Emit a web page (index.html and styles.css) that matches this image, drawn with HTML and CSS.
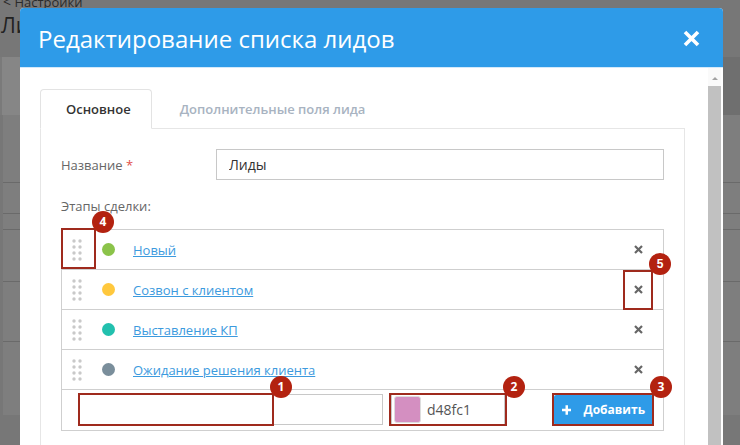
FILE: index.html
```html
<!DOCTYPE html>
<html lang="ru">
<head>
    <meta charset="UTF-8">
    <meta name="viewport" content="width=device-width, initial-scale=1.0">
    <title>Редактирование списка лидов</title>
    <link rel="stylesheet" href="styles.css">
</head>
<body>
<div class="page">
    <div class="crumbs"><span class="crumbs-arrow">&lt;</span> Настройки</div>
    <h1 class="page-title">Лиды</h1>
    <div class="toolbar">
        <div class="toolbar-left"></div>
        <div class="toolbar-right"></div>
    </div>
    <div class="table">
        <div class="table-row"></div>
        <div class="table-row"></div>
        <div class="table-row"></div>
        <div class="table-row"></div>
        <div class="table-row"></div>
        <div class="table-row"></div>
    </div>
</div>

<div class="modal">
    <div class="modal-header">
        <h2 class="modal-title">Редактирование списка лидов</h2>
        <button class="modal-close" aria-label="Закрыть">
            <svg width="17" height="17" viewBox="0 0 17 17"><path d="M2 2 L15 15 M15 2 L2 15" stroke="#fff" stroke-width="3.6"/></svg>
        </button>
    </div>
    <div class="modal-body">
        <div class="modal-content">
            <div class="tabs">
                <div class="tab active">Основное</div>
                <div class="tab">Дополнительные поля лида</div>
            </div>
            <div class="tab-panel">
                <div class="field">
                    <label class="field-label">Название <span class="req">*</span></label>
                    <input class="field-input" type="text" value="Лиды">
                </div>
                <div class="stages-label">Этапы сделки:</div>
                <div class="stages">
                    <div class="stage">
                        <span class="handle">
                            <svg width="10" height="22" viewBox="0 0 10 22"><g fill="#c9c9c9"><circle cx="2" cy="2" r="1.7"/><circle cx="8" cy="2" r="1.7"/><circle cx="2" cy="8" r="1.7"/><circle cx="8" cy="8" r="1.7"/><circle cx="2" cy="14" r="1.7"/><circle cx="8" cy="14" r="1.7"/><circle cx="2" cy="20" r="1.7"/><circle cx="8" cy="20" r="1.7"/></g></svg>
                            <span class="mark mark-handle"><span class="badge">4</span></span>
                        </span>
                        <span class="stage-dot green"></span>
                        <a class="stage-link" href="#">Новый</a>
                        <button class="stage-remove" aria-label="Удалить">
                            <svg width="9" height="9" viewBox="0 0 9 9"><path d="M1 1 L8 8 M8 1 L1 8" stroke="#666" stroke-width="2.2"/></svg>
                        </button>
                    </div>
                    <div class="stage">
                        <span class="handle">
                            <svg width="10" height="22" viewBox="0 0 10 22"><g fill="#c9c9c9"><circle cx="2" cy="2" r="1.7"/><circle cx="8" cy="2" r="1.7"/><circle cx="2" cy="8" r="1.7"/><circle cx="8" cy="8" r="1.7"/><circle cx="2" cy="14" r="1.7"/><circle cx="8" cy="14" r="1.7"/><circle cx="2" cy="20" r="1.7"/><circle cx="8" cy="20" r="1.7"/></g></svg>
                        </span>
                        <span class="stage-dot yellow"></span>
                        <a class="stage-link" href="#">Созвон с клиентом</a>
                        <button class="stage-remove" aria-label="Удалить">
                            <svg width="9" height="9" viewBox="0 0 9 9"><path d="M1 1 L8 8 M8 1 L1 8" stroke="#666" stroke-width="2.2"/></svg>
                            <span class="mark mark-remove"><span class="badge">5</span></span>
                        </button>
                    </div>
                    <div class="stage">
                        <span class="handle">
                            <svg width="10" height="22" viewBox="0 0 10 22"><g fill="#c9c9c9"><circle cx="2" cy="2" r="1.7"/><circle cx="8" cy="2" r="1.7"/><circle cx="2" cy="8" r="1.7"/><circle cx="8" cy="8" r="1.7"/><circle cx="2" cy="14" r="1.7"/><circle cx="8" cy="14" r="1.7"/><circle cx="2" cy="20" r="1.7"/><circle cx="8" cy="20" r="1.7"/></g></svg>
                        </span>
                        <span class="stage-dot teal"></span>
                        <a class="stage-link" href="#">Выставление КП</a>
                        <button class="stage-remove" aria-label="Удалить">
                            <svg width="9" height="9" viewBox="0 0 9 9"><path d="M1 1 L8 8 M8 1 L1 8" stroke="#666" stroke-width="2.2"/></svg>
                        </button>
                    </div>
                    <div class="stage">
                        <span class="handle">
                            <svg width="10" height="22" viewBox="0 0 10 22"><g fill="#c9c9c9"><circle cx="2" cy="2" r="1.7"/><circle cx="8" cy="2" r="1.7"/><circle cx="2" cy="8" r="1.7"/><circle cx="8" cy="8" r="1.7"/><circle cx="2" cy="14" r="1.7"/><circle cx="8" cy="14" r="1.7"/><circle cx="2" cy="20" r="1.7"/><circle cx="8" cy="20" r="1.7"/></g></svg>
                        </span>
                        <span class="stage-dot slate"></span>
                        <a class="stage-link" href="#">Ожидание решения клиента</a>
                        <button class="stage-remove" aria-label="Удалить">
                            <svg width="9" height="9" viewBox="0 0 9 9"><path d="M1 1 L8 8 M8 1 L1 8" stroke="#666" stroke-width="2.2"/></svg>
                        </button>
                    </div>
                    <div class="stage-add">
                        <div class="add-name">
                            <input class="text-input" type="text">
                            <span class="mark mark-name"><span class="badge">1</span></span>
                        </div>
                        <div class="color-input">
                            <span class="swatch"></span>
                            <span class="color-code">d48fc1</span>
                            <span class="mark mark-color"><span class="badge">2</span></span>
                        </div>
                        <button class="btn-add">
                            <svg width="10" height="10" viewBox="0 0 10 10"><path d="M5 0 V10 M0 5 H10" stroke="#fff" stroke-width="2.6"/></svg>
                            Добавить
                            <span class="mark mark-btn"><span class="badge">3</span></span>
                        </button>
                    </div>
                </div>
            </div>
        </div>
        <div class="scrollbar">
            <span class="scroll-arrow"></span>
            <span class="scroll-thumb"></span>
        </div>
    </div>
</div>
</body>
</html>
```

FILE: styles.css
```css
:root {
    --blue: #2e9be8;
    --mark: #9f2a1d;
    --badge: #b32210;
    --border: #cfcfcf;
    --text: #333;
}

* {
    box-sizing: border-box;
    margin: 0;
    padding: 0;
}

body {
    width: 740px;
    height: 445px;
    overflow: hidden;
    position: relative;
    font-family: 'Open Sans', 'Noto Sans', sans-serif;
    color: var(--text);
    background: #777;
}

/* page behind the dialog, already dimmed */
.page {
    display: flex;
    flex-direction: column;
    height: 100%;
}

.crumbs {
    margin-top: -7px;
    padding-left: 3px;
    font-size: 13px;
    line-height: 18px;
    color: #2b2b2b;
}

.crumbs-arrow {
    font-size: 14px;
}

.page-title {
    padding-left: 1px;
    font-size: 21px;
    font-weight: 400;
    line-height: 28px;
    height: 46px;
    color: #222;
}

.toolbar {
    display: flex;
    height: 58px;
}

.toolbar-left {
    width: 50%;
    background: #868686;
    border-left: 2px solid #7a7a7a;
}

.toolbar-right {
    flex: 1;
    background: #6f6f6f;
}

.table {
    display: flex;
    flex-direction: column;
    height: 300px;
    margin-left: 3px;
    background: #7e7e7e;
}

.table-row {
    border-bottom: 1px solid #6a6a6a;
}

.table-row:nth-child(1) { height: 68px; }
.table-row:nth-child(2) { height: 31px; }
.table-row:nth-child(3) { height: 16px; }
.table-row:nth-child(4) { height: 52px; }
.table-row:nth-child(5) { height: 60px; }
.table-row:nth-child(6) { height: 73px; border-bottom: none; }

/* dialog */
.modal {
    position: absolute;
    left: 20px;
    top: 8px;
    width: 703px;
    height: 460px;
    display: flex;
    flex-direction: column;
    background: #fff;
    border-radius: 4px 4px 0 0;
    overflow: hidden;
}

.modal-header {
    display: flex;
    align-items: center;
    justify-content: space-between;
    height: 62px;
    padding: 1px 23px 0 18px;
    background: var(--blue);
    border-bottom: 1px solid #d3e9fa;
}

.modal-title {
    font-size: 24px;
    font-weight: 400;
    color: #fff;
}

.modal-close {
    display: flex;
    border: none;
    background: none;
    cursor: pointer;
}

.modal-body {
    flex: 1;
    display: flex;
    padding-right: 2px;
}

.modal-content {
    flex: 1;
    padding: 21px 23px 0 20px;
}

.scrollbar {
    width: 13px;
    display: flex;
    flex-direction: column;
    align-items: center;
    background: #fafafa;
}

.scroll-arrow {
    margin: 9px 0 6px;
    border-left: 3px solid transparent;
    border-right: 3px solid transparent;
    border-bottom: 3px solid #a3a3a3;
}

.scroll-thumb {
    flex: 1;
    width: 13px;
    background: #c1c1c1;
}

/* tabs */
.tabs {
    display: flex;
    height: 40px;
    margin-bottom: -1px;
    position: relative;
}

.tab {
    display: flex;
    align-items: center;
    padding: 0 24px 0 25px;
    font-size: 13px;
    font-weight: 600;
    color: #a8b3c1;
}

.tab.active {
    color: #333;
    background: #fff;
    border: 1px solid #e3e3e3;
    border-bottom-color: #fff;
    border-radius: 4px 4px 0 0;
    padding-right: 20px;
}

.tab + .tab {
    padding-left: 28px;
}

.tab-panel {
    border: 1px solid #e6e6e6;
    padding: 20px 20px 30px;
    height: 340px;
}

.field {
    display: flex;
    align-items: center;
    margin-bottom: 17px;
}

.field-label {
    width: 155px;
    font-size: 13px;
    color: #666;
}

.req {
    color: #e2504a;
}

.field-input {
    flex: 1;
    height: 31px;
    padding: 0 12px;
    border: 1px solid #c8c8c8;
    font-family: inherit;
    font-size: 14px;
    color: #333;
}

.stages-label {
    font-size: 13px;
    line-height: 18px;
    color: #666;
    margin-bottom: 14px;
}

/* stage list */
.stages {
    border: 1px solid var(--border);
}

.stage {
    display: flex;
    align-items: center;
    height: 40px;
    padding-right: 10px;
    border-bottom: 1px solid var(--border);
}

.handle {
    position: relative;
    display: flex;
    align-items: center;
    align-self: stretch;
    width: 34px;
    padding-left: 10px;
}

.stage-dot {
    width: 13px;
    height: 13px;
    margin-left: 6px;
    border-radius: 50%;
}

.stage-dot.green { background: #8bc34a; }
.stage-dot.yellow { background: #ffc83d; }
.stage-dot.teal { background: #22c0ae; }
.stage-dot.slate { background: #7a8e9b; }

.stage-link {
    margin-left: 18px;
    font-size: 13px;
    color: #3c9ade;
}

.stage-remove {
    position: relative;
    display: flex;
    align-items: center;
    justify-content: center;
    align-self: stretch;
    width: 30px;
    margin-left: auto;
    border: none;
    background: none;
    cursor: pointer;
}

.stage-add {
    display: flex;
    align-items: center;
    padding: 4px 10px 5px 17px;
}

.add-name {
    position: relative;
    width: 304px;
}

.text-input {
    display: block;
    width: 100%;
    height: 31px;
    border: 1px solid #c8c8c8;
}

.color-input {
    position: relative;
    display: flex;
    align-items: center;
    width: 114px;
    height: 31px;
    margin-left: 8px;
    padding: 2px;
    border: 1px solid #c8c8c8;
}

.swatch {
    width: 27px;
    height: 27px;
    border-radius: 3px;
    border: 1px solid #ddd;
    background: #d48fc1;
}

.color-code {
    margin-left: 6px;
    font-size: 14px;
    color: #555;
}

.btn-add {
    position: relative;
    display: flex;
    align-items: center;
    gap: 12px;
    width: 99px;
    height: 30px;
    margin-left: auto;
    padding: 0 8px;
    border: none;
    border-radius: 2px;
    background: var(--blue);
    font-family: inherit;
    font-size: 12px;
    font-weight: 700;
    color: #fff;
    cursor: pointer;
}

/* annotation frames */
.mark {
    position: absolute;
    border: 2px solid var(--mark);
    pointer-events: none;
}

.mark-handle { top: -2px; left: -1px; right: 0; bottom: 0; }
.mark-remove { top: 0; left: 0; right: 0; bottom: -1px; }
.mark-name { top: -1px; left: -1px; width: 196px; bottom: -1px; }
.mark-color { top: -2px; left: -3px; right: -3px; bottom: -2px; }
.mark-btn { top: -2px; left: -2px; right: -1px; bottom: -1px; }

.badge {
    position: absolute;
    top: -19px;
    right: -20px;
    width: 22px;
    height: 22px;
    border-radius: 50%;
    background: var(--badge);
    color: #fff;
    font-size: 12px;
    font-weight: 700;
    line-height: 22px;
    text-align: center;
}
```
